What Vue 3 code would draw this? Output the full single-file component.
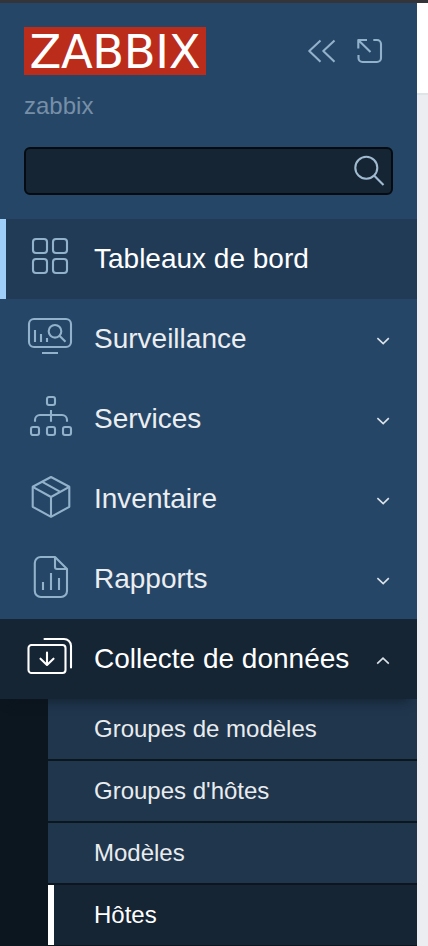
<script setup>
const chevronDown = 'M1.4 1.2 7.2 6.6l5.6-5.4'
const chevronUp = 'M1.2 6.6 7 1.2l5.8 5.4'

const menu = [
  {
    id: 'dashboards',
    label: 'Tableaux de bord',
    state: 'current',
    paths: [
      'M10 6h8a3 3 0 0 1 3 3v8a3 3 0 0 1-3 3h-8a3 3 0 0 1-3-3V9a3 3 0 0 1 3-3z',
      'M30 6h8a3 3 0 0 1 3 3v8a3 3 0 0 1-3 3h-8a3 3 0 0 1-3-3V9a3 3 0 0 1 3-3z',
      'M10 26h8a3 3 0 0 1 3 3v8a3 3 0 0 1-3 3h-8a3 3 0 0 1-3-3v-8a3 3 0 0 1 3-3z',
      'M30 26h8a3 3 0 0 1 3 3v8a3 3 0 0 1-3 3h-8a3 3 0 0 1-3-3v-8a3 3 0 0 1 3-3z',
    ],
  },
  {
    id: 'monitoring',
    label: 'Surveillance',
    chevron: chevronDown,
    paths: [
      'M8 6h32a5 5 0 0 1 5 5v18a5 5 0 0 1-5 5H8a5 5 0 0 1-5-5V11a5 5 0 0 1 5-5z',
      'M16 40h16M9 17v12M15 21v8M21 25v4',
      'M35.3 18.3a6.3 6.3 0 1 1-12.6 0a6.3 6.3 0 1 1 12.6 0zM33.5 22.8l6 6',
    ],
  },
  {
    id: 'services',
    label: 'Services',
    chevron: chevronDown,
    paths: [
      'M23 4h4a2 2 0 0 1 2 2v4a2 2 0 0 1-2 2h-4a2 2 0 0 1-2-2V6a2 2 0 0 1 2-2z',
      'M25 17v11.7M9 28.7V27a5 5 0 0 1 5-5h22a5 5 0 0 1 5 5v1.7',
      'M7 34h4a2 2 0 0 1 2 2v4a2 2 0 0 1-2 2H7a2 2 0 0 1-2-2v-4a2 2 0 0 1 2-2z',
      'M23 34h4a2 2 0 0 1 2 2v4a2 2 0 0 1-2 2h-4a2 2 0 0 1-2-2v-4a2 2 0 0 1 2-2z',
      'M39 34h4a2 2 0 0 1 2 2v4a2 2 0 0 1-2 2h-4a2 2 0 0 1-2-2v-4a2 2 0 0 1 2-2z',
    ],
  },
  {
    id: 'inventory',
    label: 'Inventaire',
    chevron: chevronDown,
    paths: [
      'M25 4 43.3 13.8v20L25 43.8 6.7 33.8v-20z',
      'M6.7 13.8 25 24l18.3-10.2M25 24v20M16.3 8.8l18 10',
    ],
  },
  {
    id: 'reports',
    label: 'Rapports',
    chevron: chevronDown,
    paths: [
      'M14.8 4h14.2L41 16v22a6 6 0 0 1-6 6H14.8a6 6 0 0 1-6-6V10a6 6 0 0 1 6-6z',
      'M29 4v10a2 2 0 0 0 2 2h10M17 29v8M25 20v17M33 25v12',
    ],
  },
  {
    id: 'collection',
    label: 'Collecte de données',
    chevron: chevronUp,
    state: 'expanded',
    paths: [
      'M5.5 12h31a3 3 0 0 1 3 3v22a3 3 0 0 1-3 3h-31a3 3 0 0 1-3-3V15a3 3 0 0 1 3-3z',
      'M18.5 6H38a7 7 0 0 1 7 7v21.5M21 19.5v12M14.5 25.7l6.5 6.3 6.5-6.3',
    ],
  },
]

const submenu = [
  { label: 'Groupes de modèles' },
  { label: "Groupes d'hôtes" },
  { label: 'Modèles' },
  { label: 'Hôtes', selected: true },
]
</script>

<template>
  <div class="window">
    <div class="topline"></div>
    <div class="body">
      <aside class="sidebar">
        <header class="header">
          <div class="logo">ZABBIX</div>
          <div class="tools">
            <svg class="line" width="28" height="26" viewBox="308 38 28 26">
              <path d="M320.5 40.5 309.3 51l11.2 10.8M334.5 40.5 323.3 51l11.2 10.8" />
            </svg>
            <svg class="line" width="28" height="26" viewBox="356 38 28 26">
              <path d="M367 40h-8.7v8.5M358.5 40.2l12 11.7M373.3 40h3.7a4 4 0 0 1 4 4v14a4 4 0 0 1-4 4h-14.5a4 4 0 0 1-4-4v-3" />
            </svg>
          </div>
        </header>
        <div class="server">zabbix</div>
        <div class="search">
          <input type="text" aria-label="Recherche" />
          <svg class="line" width="32" height="32" viewBox="0 0 32 32">
            <circle cx="13.3" cy="12.7" r="11" />
            <path d="m21.3 20.7 9.2 9.4" />
          </svg>
        </div>

        <nav>
          <div v-for="item in menu" :key="item.id" class="item" :class="item.state">
            <svg class="icon" viewBox="0 0 48 48">
              <path v-for="d in item.paths" :key="d" :d="d" />
            </svg>
            <span class="label">{{ item.label }}</span>
            <svg v-if="item.chevron" class="chevron" viewBox="0 0 14 8">
              <path :d="item.chevron" />
            </svg>
          </div>
          <div class="submenu">
            <div v-for="entry in submenu" :key="entry.label" class="entry" :class="{ selected: entry.selected }">
              {{ entry.label }}
            </div>
          </div>
        </nav>
      </aside>
      <main class="content"><div class="content-head"></div></main>
    </div>
  </div>
</template>

<style>
body {
  overflow: hidden;
}
</style>

<style scoped>
* {
  box-sizing: border-box;
}
.window {
  display: flex;
  flex-direction: column;
  width: 428px;
  height: 946px;
  overflow: hidden;
  font-family: "Liberation Sans", Arial, sans-serif;
}
.topline {
  flex: none;
  height: 3px;
  background: #343539;
}
.body {
  display: flex;
  flex: 1;
  min-height: 0;
}
.sidebar {
  flex: none;
  width: 417px;
  background: #264668;
  overflow: hidden;
}
.header {
  display: flex;
  justify-content: space-between;
  padding: 24px 33px 0 24px;
}
.logo {
  width: 182px;
  height: 48px;
  padding-left: 5.5px;
  background: #bb2c1b;
  color: #fff;
  font: 46.5px/50px "DejaVu Sans", sans-serif;
  letter-spacing: -0.4px;
  white-space: nowrap;
}
.tools {
  display: flex;
  gap: 20px;
  padding-top: 11px;
}
.line {
  fill: none;
  stroke: #92b2cb;
  stroke-width: 2.1;
  stroke-linecap: butt;
  stroke-linejoin: round;
}
.server {
  height: 28px;
  margin: 17px 0 0 24px;
  line-height: 28px;
  font-size: 24px;
  color: #768fa7;
}
.search {
  display: flex;
  align-items: center;
  width: 369px;
  height: 48px;
  margin: 27px 0 24px 24px;
  padding-right: 6px;
  background: #152534;
  border: 2px solid #050b10;
  border-radius: 6px;
}
.search input {
  flex: 1;
  min-width: 0;
  padding: 0 10px;
  background: none;
  border: 0;
  outline: 0;
  color: #fff;
  font-size: 24px;
}
.search .line {
  stroke: #a0bad0;
}
.item {
  display: flex;
  align-items: center;
  height: 80px;
  padding: 0 27px 0 26px;
  color: #ebeef0;
}
.icon {
  width: 48px;
  height: 48px;
  margin-bottom: 4px;
  fill: none;
  stroke: #92b2cb;
  stroke-width: 2.1;
  stroke-linejoin: round;
}
.label {
  flex: 1;
  margin-left: 20px;
  font-size: 28px;
  line-height: 32px;
  white-space: nowrap;
}
.chevron {
  width: 14px;
  height: 8px;
  margin-top: 4px;
  fill: none;
  stroke: #dce4ea;
  stroke-width: 1.6;
}
.current {
  padding-left: 20px;
  border-left: 6px solid #9fcff9;
  background: #213b57;
  color: #fff;
}
.expanded {
  position: relative;
  background: #152534;
  color: #fff;
  box-shadow: 0 10px 10px -8px rgba(10, 20, 28, 0.6);
}
.expanded .icon {
  stroke: #fff;
  stroke-linecap: round;
}
.submenu {
  display: flex;
  flex-direction: column;
  gap: 2px;
  padding: 0 0 1px 48px;
  background: #0c161f;
}
.entry {
  height: 60px;
  padding-left: 46px;
  line-height: 60px;
  font-size: 24px;
  color: #e9ecef;
  background: #20364d;
}
.entry.selected {
  padding-left: 40px;
  border-left: 6px solid #fff;
  background: #152534;
  color: #fff;
}
.content {
  flex: 1;
  background: #ebedf0;
}
.content-head {
  height: 92px;
  background: #fff;
  border-bottom: 2px solid #dfe4e7;
}
</style>
